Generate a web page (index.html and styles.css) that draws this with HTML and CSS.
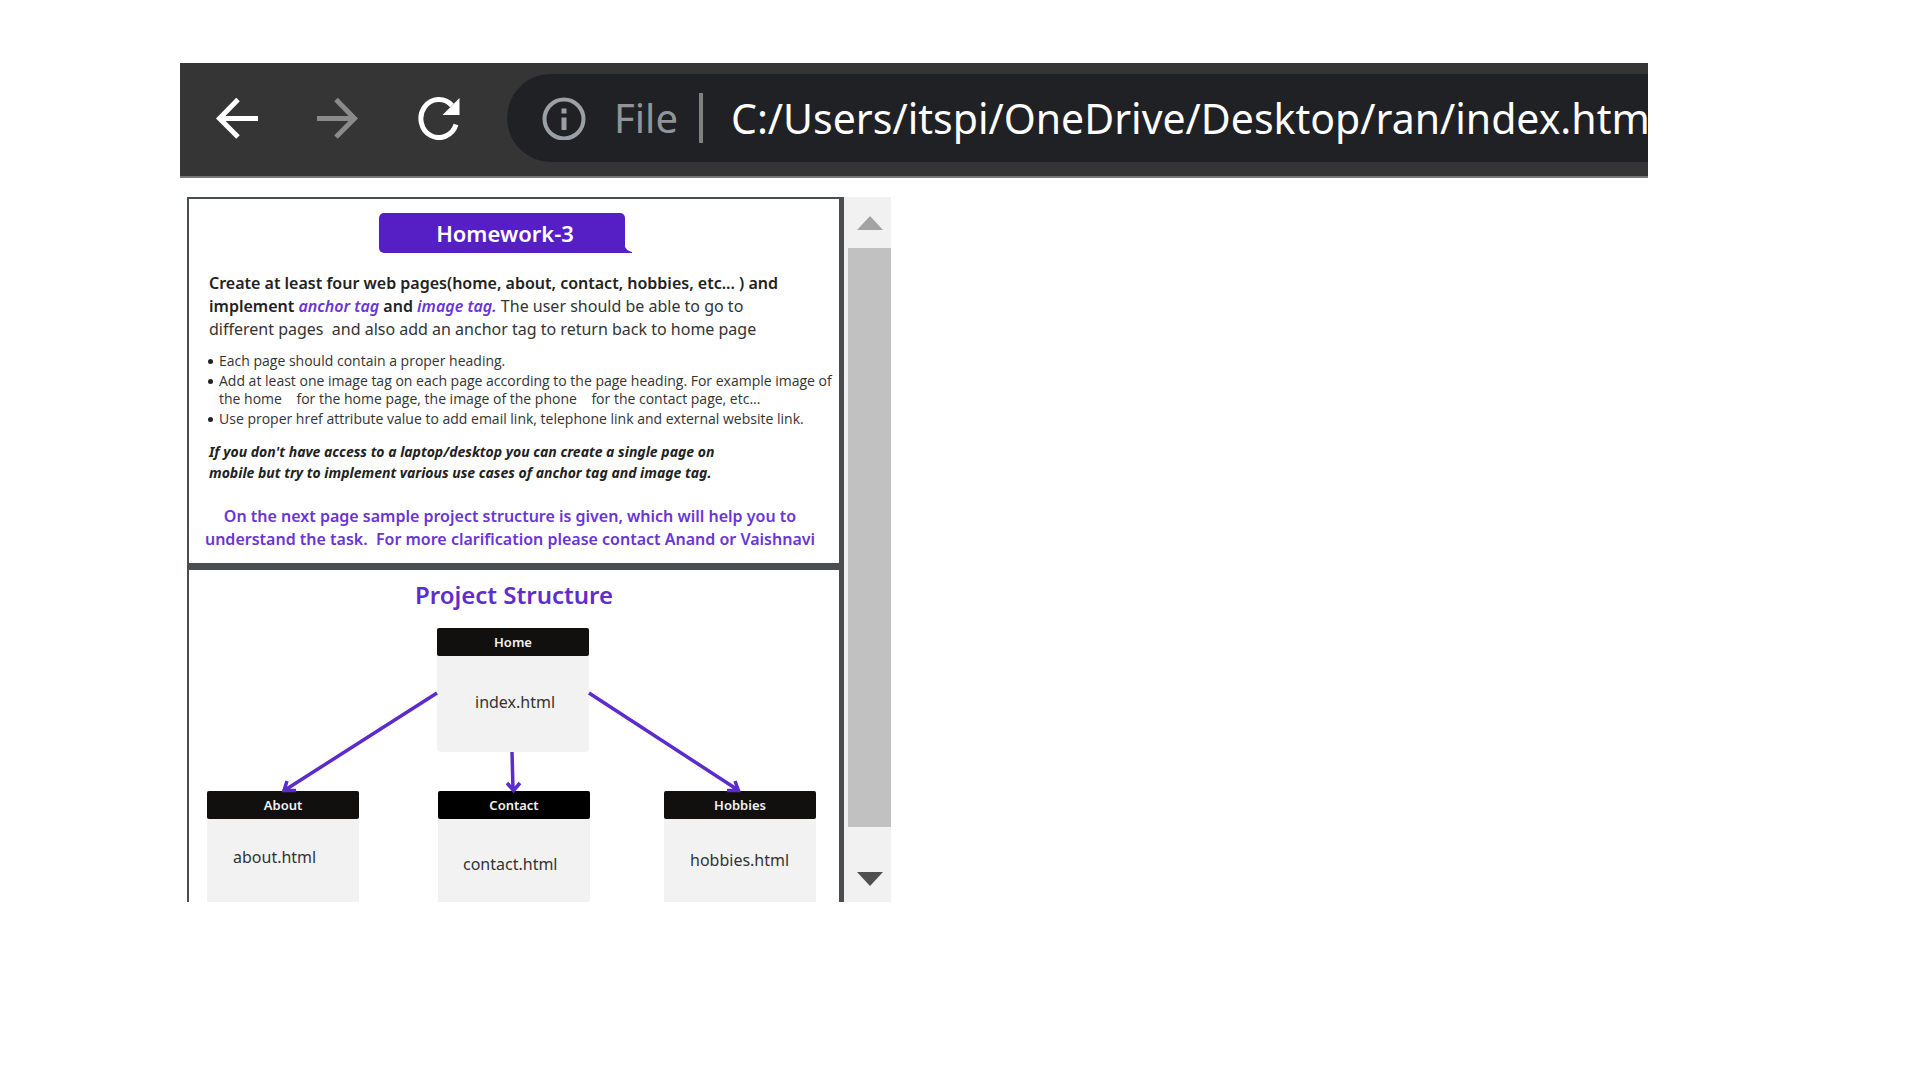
FILE: index.html
```
<!DOCTYPE html>
<html lang="en">
<head>
<meta charset="utf-8">
<title>Homework-3</title>
<link rel="stylesheet" href="styles.css">
</head>
<body>
<div class="shell">
  <header class="toolbar">
    <nav class="nav" aria-label="Browser navigation">
      <button class="nav-button" type="button" aria-label="Back">
        <svg viewBox="0 0 44 44" width="44" height="44"><path d="M23 3.500 4.500 22.500 23 41M4.500 22.500H43" fill="none" stroke="#fff" stroke-width="5"/></svg>
      </button>
      <button class="nav-button" type="button" aria-label="Forward" disabled>
        <svg viewBox="0 0 44 44" width="44" height="44"><path d="M20 3.500 38.500 22.500 20 41M38.500 22.500H1" fill="none" stroke="#8a8a8a" stroke-width="5"/></svg>
      </button>
      <button class="nav-button" type="button" aria-label="Reload">
        <svg viewBox="0 0 44 44" width="44" height="44"><path d="M39 28.500A18 19 0 1 1 35 9.500" fill="none" stroke="#fff" stroke-width="5"/><path d="M42.500 2V19H25.500Z" fill="#fff"/></svg>
      </button>
    </nav>
    <form class="address">
      <svg viewBox="0 0 44 44" width="44" height="44" aria-hidden="true"><circle cx="22" cy="23" r="19.500" fill="none" stroke="#9aa0a6" stroke-width="4"/><path d="M22 21.500V34M22 12.500V17.500" stroke="#9aa0a6" stroke-width="5"/></svg>
      <label class="scheme" for="url">File</label>
      <span class="divider"></span>
      <input class="url" id="url" type="text" value="C:/Users/itspi/OneDrive/Desktop/ran/index.htm" spellcheck="false">
    </form>
  </header>

  <main class="viewer">
    <div class="document">
      <section class="page">
        <h1 class="badge">Homework-3<svg class="badge-tail" viewBox="0 0 10 6" width="10" height="6" aria-hidden="true"><path d="M0 0H3Q5 4 10 5V6H0Z" fill="#561fc6"/></svg></h1>
        <p class="lead"><strong>Create at least four web pages(home, about, contact, hobbies, etc... ) and<br>implement <em>anchor tag</em> and <em>image tag.</em></strong> The user should be able to go to<br>different pages&nbsp; and also add an anchor tag to return back to home page</p>
        <ul class="tasks">
          <li>Each page should contain a proper heading.</li>
          <li>Add at least one image tag on each page according to the page heading. For example image of<br>the home&nbsp;&nbsp;&nbsp; for the home page, the image of the phone&nbsp;&nbsp;&nbsp; for the contact page, etc...</li>
          <li>Use proper href attribute value to add email link, telephone link and external website link.</li>
        </ul>
        <p class="note">If you don't have access to a laptop/desktop you can create a single page on<br>mobile but try to implement various use cases of anchor tag and image tag.</p>
        <p class="hint">On the next page sample project structure is given, which will help you to<br>understand the task.&nbsp; For more clarification please contact Anand or Vaishnavi</p>
      </section>
      <section class="page page-structure">
        <h2 class="title">Project Structure</h2>
        <div class="diagram">
          <div class="node node-home"><h3 class="node-title">Home</h3></div>
          <div class="node node-about"><h3 class="node-title">About</h3></div>
          <div class="node node-contact"><h3 class="node-title">Contact</h3></div>
          <div class="node node-hobbies"><h3 class="node-title">Hobbies</h3></div>
          <span class="file file-home">index.html</span>
          <span class="file file-about">about.html</span>
          <span class="file file-contact">contact.html</span>
          <span class="file file-hobbies">hobbies.html</span>
          <svg class="arrows" viewBox="0 0 651 291" width="651" height="291" aria-hidden="true">
            <g fill="none" stroke="#5c2bcb" stroke-width="3.500">
              <path d="M248 82 96 179M98 170 95 179.500 107 179.500"/>
              <path d="M323 141 324 179M318 172 324.500 179.500 331 172"/>
              <path d="M400 82 549 179M546 170 549.500 179.500 538 179.500"/>
            </g>
          </svg>
        </div>
      </section>
    </div>
    <div class="scrollbar">
      <button class="scroll-button" type="button" aria-label="Scroll up"><svg viewBox="0 0 26 14" width="26" height="14"><path d="M13 0 26 14H0Z" fill="#a3a3a3"/></svg></button>
      <div class="thumb"></div>
      <button class="scroll-button scroll-down" type="button" aria-label="Scroll down"><svg viewBox="0 0 26 14" width="26" height="14"><path d="M13 14 26 0H0Z" fill="#505050"/></svg></button>
    </div>
  </main>
</div>
</body>
</html>
```
FILE: styles.css
```
* { box-sizing: border-box; }

body {
  margin: 0;
  background: #fff;
  color: #333;
  font-family: "Noto Sans", "Open Sans", sans-serif;
}

h1, h2, h3, p, ul { margin: 0; padding: 0; }

button {
  display: flex;
  align-items: center;
  justify-content: center;
  padding: 0;
  border: 0;
  background: none;
}

svg { display: block; flex: none; }

.shell { padding: 63px 272px 0 180px; }

/* Browser toolbar */
.toolbar {
  display: flex;
  align-items: center;
  padding: 11px 0 14px 35px;
  border-bottom: 2px solid #777;
  background: #353535;
}

.nav { display: flex; gap: 57px; padding-right: 46px; }

.address {
  display: flex;
  flex: 1;
  align-items: center;
  min-width: 0;
  height: 88px;
  padding-left: 35px;
  border-radius: 44px 0 0 44px;
  background: #202124;
}

.scheme {
  padding: 0 21px 0 28px;
  color: #8f959b;
  font-size: 40px;
  line-height: 56px;
}

.divider { flex: none; width: 4px; height: 50px; background: #808080; }

.url {
  flex: 1;
  min-width: 0;
  height: 56px;
  padding: 0 0 0 28px;
  border: 0;
  outline: 0;
  background: none;
  color: #fff;
  font: 41px/56px "Noto Sans", sans-serif;
}

/* Document viewer */
.viewer { display: flex; width: 704px; max-width: 100%; margin: 19px 0 0 7px; }

.document {
  flex: 1;
  min-width: 0;
  border: solid #4a4e51;
  border-width: 2px 5px 0 2px;
  white-space: nowrap;
}

.page { padding: 14px 6px 12px 20px; }

.badge {
  position: relative;
  width: 246px;
  margin: 0 0 19px 170px;
  padding-left: 6px;
  border-radius: 5px 5px 0 5px;
  background: #561fc6;
  color: #fff;
  font-size: 22px;
  font-weight: 600;
  line-height: 40px;
  text-align: center;
}

.badge-tail { position: absolute; right: -7px; bottom: 0; }

.lead { margin-bottom: 11px; font-size: 16px; line-height: 23px; }
.lead strong { color: #222; font-weight: 600; }
.lead em { color: #6a35d6; }

.tasks {
  display: grid;
  gap: 2px;
  margin-bottom: 13px;
  padding-left: 10px;
  font-family: "Open Sans", sans-serif;
  font-size: 14px;
  line-height: 18px;
  list-style: none;
}

.tasks li { position: relative; }

.tasks li::before {
  content: "";
  position: absolute;
  top: 7px;
  left: -11px;
  width: 5px;
  height: 5px;
  border-radius: 50%;
  background: #222;
}

.note {
  margin-bottom: 22px;
  color: #222;
  font-size: 14px;
  font-style: italic;
  font-weight: 700;
  line-height: 21px;
}

.hint {
  margin: 0 12px 0 -10px;
  color: #6a35d6;
  font-size: 16px;
  font-weight: 600;
  line-height: 23px;
  text-align: center;
}

.page-structure { padding: 9px 0 0; border-top: 7px solid #4a4e51; }

.title {
  color: #5f2dcc;
  font-size: 24px;
  font-weight: 600;
  line-height: 32px;
  text-align: center;
}

/* Project diagram: nodes sit on a free canvas */
.diagram { position: relative; height: 291px; }

.node {
  position: absolute;
  width: 152px;
  height: 111px;
  background: #f2f2f2;
}

.node-title {
  border-radius: 2px;
  background: #11100e;
  color: #f2f2f2;
  font-size: 13px;
  font-weight: 600;
  line-height: 28px;
  text-align: center;
}

.node-home { top: 17px; left: 248px; height: 124px; border-radius: 4px; }
.node-about { top: 180px; left: 18px; }
.node-contact { top: 180px; left: 249px; }
.node-contact .node-title { background: #000; }
.node-hobbies { top: 180px; left: 475px; }

.file { position: absolute; font-size: 16px; line-height: 20px; }
.file-home { top: 81px; left: 286px; }
.file-about { top: 236px; left: 44px; }
.file-contact { top: 243px; left: 274px; }
.file-hobbies { top: 239px; left: 501px; }

.arrows { position: absolute; top: 0; left: 0; }

.scrollbar {
  display: flex;
  flex: none;
  flex-direction: column;
  width: 47px;
  padding-left: 4px;
  background: #f1f1f1;
}

.scroll-button { height: 51px; }
.scroll-down { height: 75px; padding-top: 28px; }
.thumb { flex: 1; background: #c1c1c1; }
```
